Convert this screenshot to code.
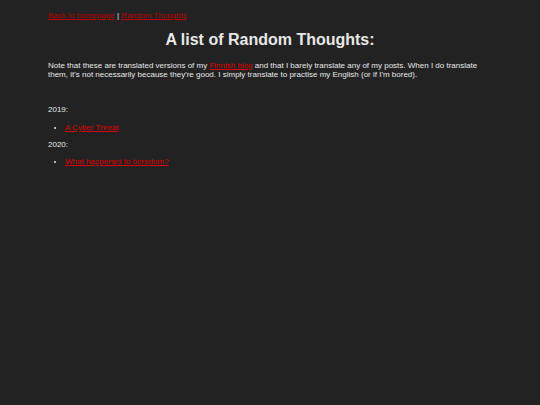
import React from 'react';

const linkCls = 'text-[#d00] underline';

const App = () => {
  return (
    <div className="min-h-[405px] bg-[#222] text-[#e8e8e8] font-['Liberation_Sans',Arial,sans-serif] text-[8px] leading-[1.15] px-[48px] pt-[11px]">
      <div>
        <a href="#" className="text-[#b00] underline">Back to homepage</a> | <a href="#" className="text-[#b00] underline">Random Thoughts</a>
      </div>
      <h1 className="text-center font-bold text-[16px] mt-[10.5px] mb-[11.5px]">A list of Random Thoughts:</h1>
      <p>
        Note that these are translated versions of my <a href="#" className={linkCls}>Finnish blog</a> and that I barely translate any of my posts. When I do translate them, it's not necessarily because they're good. I simply translate to practise my English (or if I'm bored).
      </p>
      <p className="mt-[26.5px]">2019:</p>
      <ul className="list-disc pl-[17px] my-[8px]">
        <li><a href="#" className={linkCls}>A Cyber Threat</a></li>
      </ul>
      <p>2020:</p>
      <ul className="list-disc pl-[17px] my-[8px]">
        <li><a href="#" className={linkCls}>What happened to boredom?</a></li>
      </ul>
    </div>
  );
};

export default App;
